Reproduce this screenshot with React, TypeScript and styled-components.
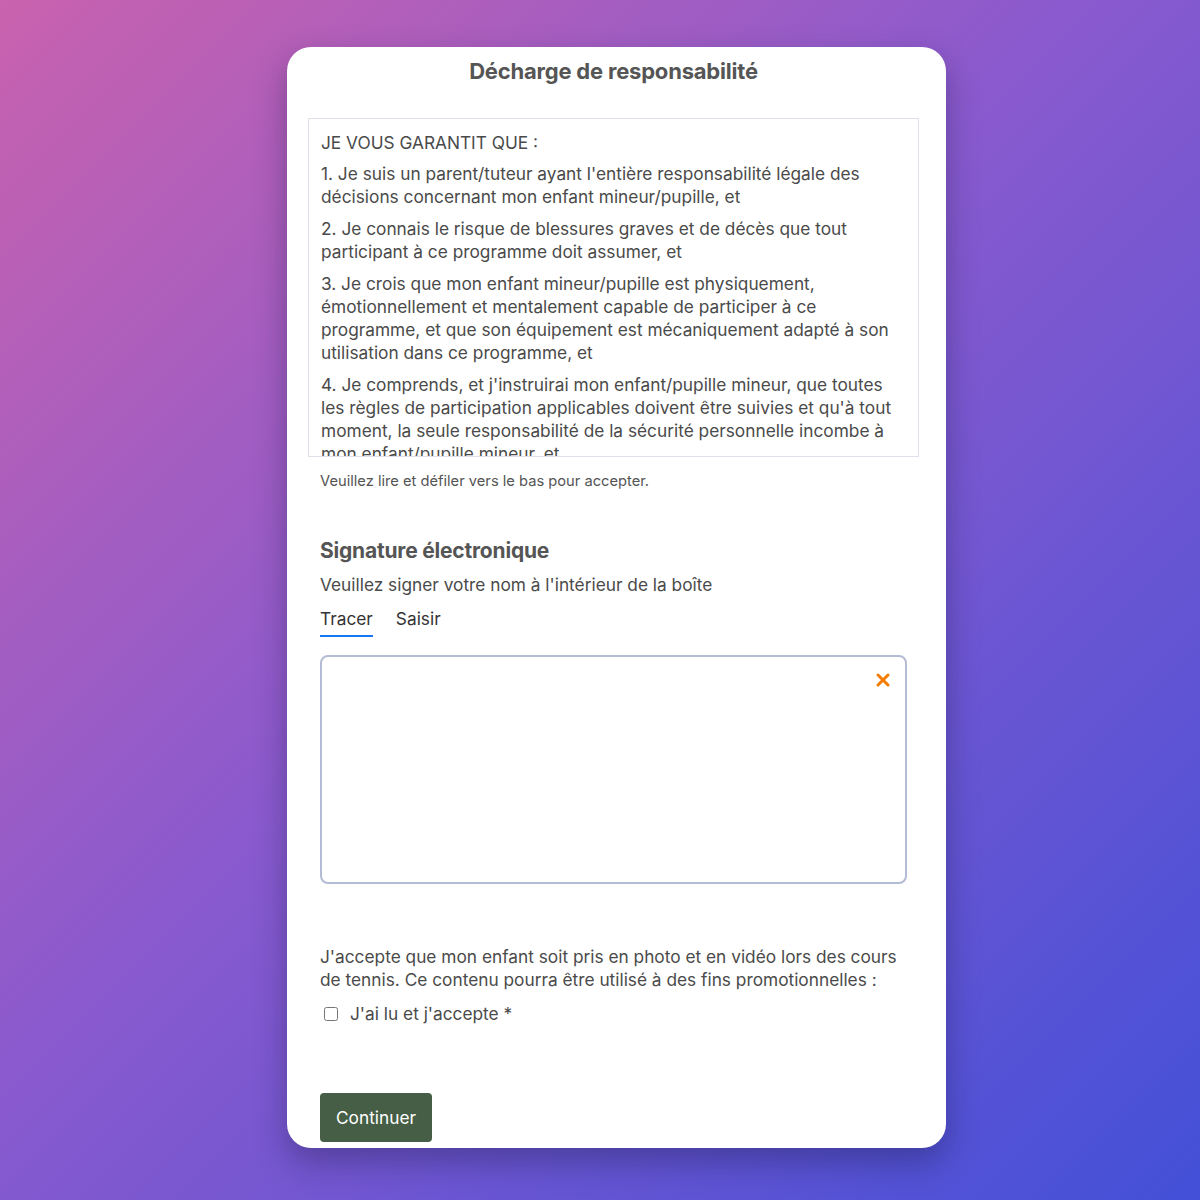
import React, { useState } from 'react';
import styled, { createGlobalStyle } from 'styled-components';

const GlobalStyle = createGlobalStyle`
    html, body {
        margin: 0;
        padding: 0;
    }
    body {
        font-family: Inter, 'Noto Sans', 'Liberation Sans', sans-serif;
        color: #4a4a4a;
        -webkit-font-smoothing: antialiased;
    }
`;

const Page = styled.div`
    width: 1200px;
    height: 1200px;
    box-sizing: border-box;
    padding: 47px 0 0 287px;
    display: flex;
    align-items: flex-start;
    background: linear-gradient(135deg, #c962ae 0%, #8a5ace 45%, #4350d8 100%);
`;

const Card = styled.div`
    width: 659px;
    height: 1101px;
    box-sizing: border-box;
    background: #fff;
    border-radius: 24px;
    overflow: hidden;
    box-shadow: 0 14px 32px rgba(20, 20, 60, 0.35);
    padding: 12px 27px 0 21px;
    display: flex;
    flex-direction: column;
`;

const Title = styled.h1`
    margin: 0;
    font-size: 22px;
    line-height: 24px;
    font-weight: 700;
    color: #555;
    text-align: center;
    letter-spacing: -0.2px;
`;

const Waiver = styled.div`
    margin-top: 35px;
    height: 339px;
    box-sizing: border-box;
    border: 1px solid #dfe1ea;
    padding: 12px 12px 0;
    overflow-y: auto;
    scrollbar-width: none;
    &::-webkit-scrollbar {
        display: none;
    }
`;

const Clause = styled.p`
    margin: 0 0 9px;
    font-size: 17.3px;
    line-height: 23px;
    color: #4a4a4a;

    &:first-child {
        margin-bottom: 8px;
    }
`;

const Hint = styled.div`
    margin: 15px 0 0 12px;
    font-size: 14.7px;
    line-height: 18px;
    color: #555;
`;

const Section = styled.div`
    margin: 0 12px;
    display: flex;
    flex-direction: column;
`;

const SectionTitle = styled.h2`
    margin: 49px 0 0;
    font-size: 21px;
    line-height: 24px;
    font-weight: 700;
    color: #555;
    letter-spacing: -0.2px;
`;

const Text = styled.p<{ $top: number }>`
    margin: ${(p) => p.$top}px 0 0;
    font-size: 17.3px;
    line-height: 23px;
    color: #4a4a4a;
`;

const Tabs = styled.div`
    margin-top: 11px;
    display: flex;
    gap: 23px;
`;

const Tab = styled.button<{ $active?: boolean }>`
    padding: 0 0 5px;
    border: none;
    background: none;
    font-family: inherit;
    font-size: 17.3px;
    line-height: 23px;
    color: #333;
    cursor: pointer;
    border-bottom: 2px solid ${(p) => (p.$active ? '#1877f2' : 'transparent')};
`;

const Pad = styled.div`
    position: relative;
    margin-top: 18px;
    width: 587px;
    height: 229px;
    box-sizing: border-box;
    border: 2px solid #b3bcd4;
    border-radius: 8px;
`;

const ClearButton = styled.button`
    position: absolute;
    top: 15px;
    right: 14px;
    padding: 0;
    border: none;
    background: none;
    cursor: pointer;
    display: flex;
`;

const CheckRow = styled.label`
    margin-top: 11px;
    display: flex;
    align-items: center;
    gap: 12px;
    font-size: 17.3px;
    line-height: 23px;
    color: #4a4a4a;
`;

const Check = styled.input`
    margin: 0 0 0 4px;
    width: 14px;
    height: 14px;
`;

const Submit = styled.button`
    margin-top: 68px;
    align-self: flex-start;
    width: 112px;
    height: 49px;
    border: none;
    border-radius: 4px;
    background: #455e45;
    color: #fff;
    font-family: inherit;
    font-size: 17.3px;
    cursor: pointer;
`;

const clauses = [
    'JE VOUS GARANTIT QUE :',
    "1. Je suis un parent/tuteur ayant l'entière responsabilité légale des décisions concernant mon enfant mineur/pupille, et",
    '2. Je connais le risque de blessures graves et de décès que tout participant à ce programme doit assumer, et',
    '3. Je crois que mon enfant mineur/pupille est physiquement, émotionnellement et mentalement capable de participer à ce programme, et que son équipement est mécaniquement adapté à son utilisation dans ce programme, et',
    "4. Je comprends, et j'instruirai mon enfant/pupille mineur, que toutes les règles de participation applicables doivent être suivies et qu'à tout moment, la seule responsabilité de la sécurité personnelle incombe à mon enfant/pupille mineur, et",
    "5. J'accepte de libérer l'organisateur de toute réclamation liée à la participation de mon enfant mineur/pupille à ce programme.",
];

const App = () => {
    const [mode, setMode] = useState<'draw' | 'type'>('draw');
    const [accepted, setAccepted] = useState(false);

    return (
        <Page>
            <GlobalStyle />
            <Card>
                <Title>Décharge de responsabilité</Title>
                <Waiver>
                    {clauses.map((c) => (
                        <Clause key={c}>{c}</Clause>
                    ))}
                </Waiver>
                <Hint>Veuillez lire et défiler vers le bas pour accepter.</Hint>
                <Section>
                    <SectionTitle>Signature électronique</SectionTitle>
                    <Text $top={10}>Veuillez signer votre nom à l'intérieur de la boîte</Text>
                    <Tabs>
                        <Tab $active={mode === 'draw'} onClick={() => setMode('draw')}>
                            Tracer
                        </Tab>
                        <Tab $active={mode === 'type'} onClick={() => setMode('type')}>
                            Saisir
                        </Tab>
                    </Tabs>
                    <Pad>
                        <ClearButton aria-label="Effacer">
                            <svg width="16" height="16" viewBox="0 0 16 16">
                                <path d="M3 3 L13 13 M13 3 L3 13" stroke="#f57c00" strokeWidth="3" strokeLinecap="round" />
                            </svg>
                        </ClearButton>
                    </Pad>
                    <Text $top={61}>
                        J'accepte que mon enfant soit pris en photo et en vidéo lors des cours de tennis. Ce contenu pourra
                        être utilisé à des fins promotionnelles :
                    </Text>
                    <CheckRow>
                        <Check type="checkbox" checked={accepted} onChange={(e) => setAccepted(e.target.checked)} />
                        J'ai lu et j'accepte *
                    </CheckRow>
                    <Submit>Continuer</Submit>
                </Section>
            </Card>
        </Page>
    );
};

export default App;
